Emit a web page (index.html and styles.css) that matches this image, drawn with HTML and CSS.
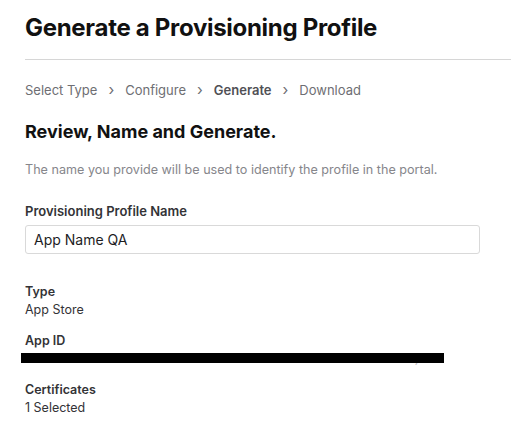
FILE: index.html
```html
<!DOCTYPE html>
<html lang="en">
<head>
<meta charset="utf-8">
<title>Generate a Provisioning Profile</title>
<link rel="stylesheet" href="styles.css">
</head>
<body>
<div class="page">
  <h1 class="title">Generate a Provisioning Profile</h1>
  <hr class="divider">
  <nav class="steps">
    <span class="step">Select Type</span>
    <span class="chev">&#x203A;</span>
    <span class="step">Configure</span>
    <span class="chev">&#x203A;</span>
    <span class="step current">Generate</span>
    <span class="chev">&#x203A;</span>
    <span class="step">Download</span>
  </nav>
  <h2 class="subtitle">Review, Name and Generate.</h2>
  <p class="desc">The name you provide will be used to identify the profile in the portal.</p>
  <label class="label" for="pname">Provisioning Profile Name</label>
  <input class="field" id="pname" type="text" value="App Name QA">
  <dl class="details">
    <div class="item">
      <dt>Type</dt>
      <dd>App Store</dd>
    </div>
    <div class="item">
      <dt>App ID</dt>
      <dd class="redacted"><span class="ghost">Xxxxxxx xxxxx xxxxx XXXXXXXXX xx xxxxxxx xxxxxxxxxx xxxxxx)</span><span class="bar"></span></dd>
    </div>
    <div class="item">
      <dt>Certificates</dt>
      <dd>1 Selected</dd>
    </div>
  </dl>
</div>
</body>
</html>
```
FILE: styles.css
```css
html, body {
  margin: 0;
  padding: 0;
  background: #ffffff;
}
body {
  font-family: Inter, "Noto Sans", "Liberation Sans", sans-serif;
  color: #1d1d1f;
}
.page {
  padding-left: 25px;
}
.title {
  margin: 0;
  padding-top: 12px;
  font-size: 24px;
  font-weight: 700;
  line-height: 32px;
  letter-spacing: -0.3px;
  color: #111;
}
.divider {
  margin: 15px 0 0 0;
  border: 0;
  border-top: 1px solid #d6d6d6;
  height: 0;
}
.steps {
  display: flex;
  align-items: center;
  gap: 11px;
  margin-top: 21px;
  font-size: 13px;
  line-height: 18px;
  color: #6e6e73;
}
.step.current {
  font-weight: 600;
  color: #505055;
}
.chev {
  font-size: 15px;
  color: #6e6e73;
}
.subtitle {
  margin: 21px 0 0 0;
  font-size: 18px;
  font-weight: 700;
  line-height: 24px;
  color: #111;
}
.desc {
  margin: 18px 0 0 0;
  font-size: 12.6px;
  line-height: 16px;
  color: #86868b;
}
.label {
  display: block;
  margin-top: 25px;
  font-size: 13px;
  font-weight: 600;
  line-height: 16px;
  color: #333336;
}
.field {
  display: block;
  box-sizing: border-box;
  width: 455px;
  height: 29px;
  margin-top: 6px;
  padding: 0 8px;
  border: 1px solid #d9d9d9;
  border-radius: 3px;
  font-family: inherit;
  font-size: 14px;
  color: #1d1d1f;
  background: #fff;
  outline: none;
}
.details {
  margin: 29px 0 0 0;
  display: flex;
  flex-direction: column;
  gap: 13px;
}
.item dt {
  font-size: 12.5px;
  font-weight: 600;
  line-height: 18px;
  color: #333336;
}
.item dd {
  margin: 0;
  font-size: 12.5px;
  line-height: 18px;
  color: #333336;
}
.redacted {
  position: relative;
  white-space: nowrap;
  overflow: visible;
}
.ghost {
  color: #c2c2c5;
}
.bar {
  position: absolute;
  left: -4px;
  top: 3px;
  width: 423px;
  height: 10px;
  background: #000;
}
```
